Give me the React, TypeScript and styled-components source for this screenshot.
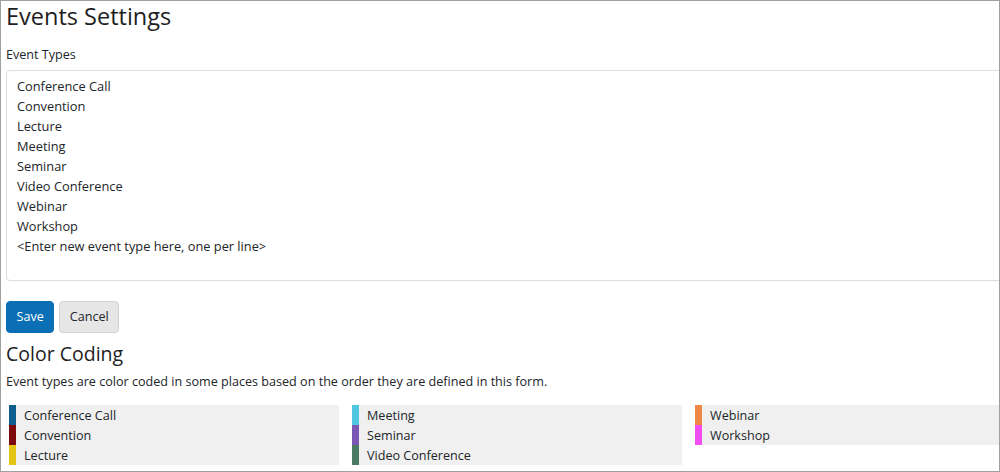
import React from "react";
import styled, { createGlobalStyle } from "styled-components";

const GlobalStyle = createGlobalStyle`
  html, body { margin: 0; padding: 0; background: #fff; }
  body { font-family: "Open Sans", "Noto Sans", sans-serif; color: #212529; }
  * { box-sizing: border-box; }
`;

const Frame = styled.div`
  width: 1000px;
  height: 472px;
  border: 1px solid #a0a0a0;
  overflow: hidden;
  background: #fff;
`;

const Page = styled.div`
  width: 1100px;
  padding: 0 5px;
  font-size: 12.6px;
  line-height: 20px;
`;

const Title = styled.h1`
  margin: -1px 0 0;
  font-size: 23.5px;
  line-height: 32px;
  font-weight: 400;
  color: #1e1e1e;
`;

const Label = styled.label`
  display: block;
  margin-top: 13px;
  font-size: 12.6px;
  line-height: 20px;
`;

const TypesArea = styled.textarea`
  display: block;
  width: 100%;
  height: 211px;
  margin-top: 5px;
  padding: 5px 10px;
  border: 1px solid #dcdde2;
  border-radius: 4px;
  font-family: "Open Sans", "Noto Sans", sans-serif;
  font-size: 12.8px;
  line-height: 20px;
  color: #212529;
  resize: none;
  overflow: hidden;
  outline: none;
  background: #fff;
`;

const Actions = styled.div`
  display: flex;
  gap: 5px;
  margin-top: 20px;
`;

const Button = styled.button<{ $primary?: boolean }>`
  height: 32px;
  padding: 0 9.5px;
  border-radius: 4px;
  font-family: "Open Sans", "Noto Sans", sans-serif;
  font-size: 12.6px;
  line-height: 20px;
  cursor: pointer;
  border: 1px solid ${(p) => (p.$primary ? "#0b6fb6" : "#d2d2d2")};
  background: ${(p) => (p.$primary ? "#0b6fb6" : "#e6e6e6")};
  color: ${(p) => (p.$primary ? "#fff" : "#212529")};
`;

const SubTitle = styled.h2`
  margin: 9px 0 0;
  font-size: 19.5px;
  line-height: 24px;
  font-weight: 400;
  color: #1e1e1e;
`;

const Note = styled.p`
  margin: 6px 0 0;
  font-size: 12.6px;
  line-height: 20px;
`;

const Legend = styled.div`
  display: grid;
  grid-template-columns: repeat(3, 330px);
  column-gap: 13px;
  margin: 13px 0 0 3px;
  align-items: start;
`;

const LegendColumn = styled.div`
  display: flex;
  flex-direction: column;
`;

const LegendItem = styled.div<{ $color: string }>`
  height: 20px;
  background: #f0f0f0;
  border-left: 7px solid ${(p) => p.$color};
  padding-left: 8px;
  font-size: 12.6px;
  line-height: 21px;
  color: #212529;
`;

const types = [
  "Conference Call",
  "Convention",
  "Lecture",
  "Meeting",
  "Seminar",
  "Video Conference",
  "Webinar",
  "Workshop",
];

const colors = [
  "#0f5f8e",
  "#7d0a0a",
  "#e3c515",
  "#4fc7e1",
  "#7a58b4",
  "#4a7b62",
  "#ef8847",
  "#f04ef0",
];

const columns = [
  [0, 1, 2],
  [3, 4, 5],
  [6, 7],
];

export default function App() {
  const text = types.join("\n") + "\n<Enter new event type here, one per line>";
  return (
    <>
      <GlobalStyle />
      <Frame>
        <Page>
          <Title>Events Settings</Title>
          <Label>Event Types</Label>
          <TypesArea defaultValue={text} spellCheck={false} />
          <Actions>
            <Button $primary>Save</Button>
            <Button>Cancel</Button>
          </Actions>
          <SubTitle>Color Coding</SubTitle>
          <Note>
            Event types are color coded in some places based on the order they are defined in this form.
          </Note>
          <Legend>
            {columns.map((col, ci) => (
              <LegendColumn key={ci}>
                {col.map((i) => (
                  <LegendItem key={i} $color={colors[i]}>
                    {types[i]}
                  </LegendItem>
                ))}
              </LegendColumn>
            ))}
          </Legend>
        </Page>
      </Frame>
    </>
  );
}
